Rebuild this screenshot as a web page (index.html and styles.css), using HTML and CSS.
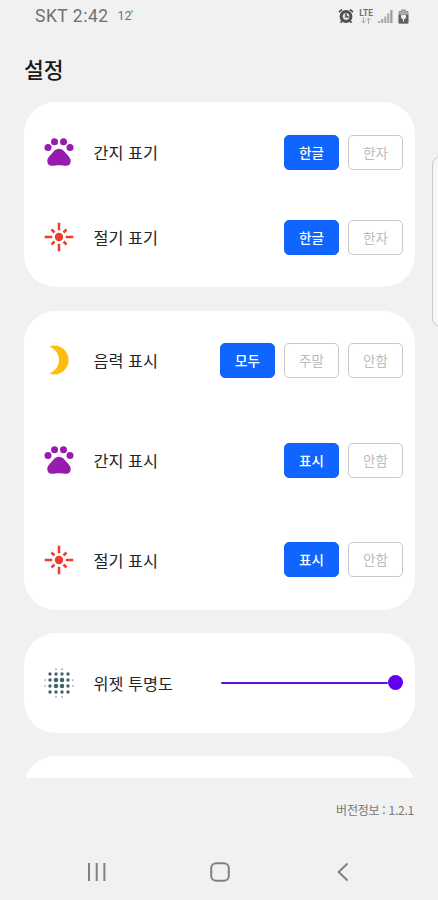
FILE: index.html
```html
<!DOCTYPE html>
<html lang="ko">
<head>
<meta charset="utf-8">
<title>설정</title>
<link rel="stylesheet" href="styles.css">
</head>
<body>
<svg class="defs" width="0" height="0" aria-hidden="true">
  <symbol id="paw" viewBox="0 0 30 30">
    <circle cx="4" cy="10.500" r="3.500"/><circle cx="10.500" cy="4.800" r="3.500"/><circle cx="19.500" cy="4.800" r="3.500"/><circle cx="26" cy="10.500" r="3.500"/>
    <path d="M15 11.800c3.200 0 5 2.200 6.700 4.300 2 2.500 5.100 4.700 5 8.300-.1 2.800-1.900 4.300-4.400 4.300-2.300 0-4.500-.5-7.300-.5s-5 .5-7.300.5c-2.500 0-4.300-1.500-4.400-4.300-.1-3.600 3-5.800 5-8.300 1.700-2.100 3.500-4.300 6.700-4.300z"/>
  </symbol>
  <symbol id="sun" viewBox="0 0 30 30">
    <circle cx="15" cy="15" r="4.200"/>
    <path d="M15 .7v7.500M15 21.800v7.500M.7 15h7.500M21.800 15h7.500M7.500 7.500l3 3M19.500 19.500l3 3M22.500 7.500l-3 3M10.500 19.500l-3 3" fill="none" stroke="currentColor" stroke-width="2.500"/>
  </symbol>
</svg>
<header class="status">
  <span class="clock">SKT 2:42</span><span class="temp">12<i>′</i></span>
  <div class="signals">
    <svg width="16" height="16" viewBox="0 0 16 16"><circle cx="8" cy="8.500" r="4.900" fill="#ddd" stroke="#505050" stroke-width="3"/><path d="M8 5.600v3.200h2.600" fill="none" stroke="#505050" stroke-width="1.500"/><path d="M1 4.200l3-2.700M15 4.200l-3-2.700M4.200 12.500l-1.700 2.300M11.800 12.500l1.700 2.300" stroke="#505050" stroke-width="1.700"/></svg>
    <div class="lte"><span>LTE</span><svg width="12" height="7" viewBox="0 0 12 7"><path d="M3.500 0v6M1.500 3.800l2 2.200 2-2.200M8.500 7V1M6.500 3.200l2-2.200 2 2.200" fill="none" stroke="#aaa" stroke-width="1"/></svg></div>
    <svg class="bars" width="15" height="14" viewBox="0 0 15 14"><path d="M1.200 14v-2M4.200 14v-4M7.300 14V7.500M10.300 14V4.500" stroke="#a9a9a9" stroke-width="2.100"/><path d="M13.400 14V1" stroke="#999" stroke-width="2.100"/></svg>
    <svg width="11" height="15" viewBox="0 0 11 15"><path d="M3.500 1h4v1.500H10V14H1V2.500h2.500z" fill="#aaa" stroke="#929292"/><path d="M.7 5.800h9.600V14.500H.7z" fill="#606060"/><path d="M5.500 12.500V10M3.500 6.500v2q0 1.300 2 1.300t2-1.300v-2z" fill="#f1f1f1" stroke="#f1f1f1" stroke-width="1"/></svg>
  </div>
</header>
<h1>설정</h1>
<main>
  <section class="card compact">
    <div class="row"><svg class="icon purple"><use href="#paw"/></svg><span class="label">간지 표기</span><div class="options"><button class="on">한글</button><button>한자</button></div></div>
    <div class="row"><svg class="icon red"><use href="#sun"/></svg><span class="label">절기 표기</span><div class="options"><button class="on">한글</button><button>한자</button></div></div>
  </section>
  <section class="card">
    <div class="row"><svg class="icon yellow" viewBox="0 0 30 30"><path d="M5.500 1.500C7 .8 8.500.5 10.200.5c8 0 14.400 6.500 14.400 14.500s-6.400 14.500-14.400 14.500c-1.700 0-3.200-.3-4.700-1C11.200 26 15 21.200 15 15S11.200 4 5.500 1.500z"/></svg><span class="label">음력 표시</span><div class="options"><button class="on">모두</button><button>주말</button><button>안함</button></div></div>
    <div class="row"><svg class="icon purple"><use href="#paw"/></svg><span class="label">간지 표시</span><div class="options"><button class="on">표시</button><button>안함</button></div></div>
    <div class="row"><svg class="icon red"><use href="#sun"/></svg><span class="label">절기 표시</span><div class="options"><button class="on">표시</button><button>안함</button></div></div>
  </section>
  <section class="card">
    <div class="row">
      <svg class="icon dots" viewBox="0 0 30 30">
        <g fill="none" stroke-linecap="round">
          <path d="M12 12h0M18 12h0M12 18h0M18 18h0" stroke-width="4.600"/>
          <path d="M6 6h0M12 6h0M18 6h0M24 6h0M6 12h0M24 12h0M6 18h0M24 18h0M6 24h0M12 24h0M18 24h0M24 24h0" stroke-width="3.400"/>
          <path d="M12 1.200h0M18 1.200h0M12 28.800h0M18 28.800h0M1.200 12h0M1.200 18h0M28.800 12h0M28.800 18h0" stroke-width="1.700" opacity=".6"/>
        </g>
      </svg>
      <span class="label">위젯 투명도</span>
      <div class="slider"><div class="track"></div><div class="thumb"></div></div>
    </div>
  </section>
  <section class="card"><div class="row"></div></section>
  <div class="edge"></div>
</main>
<footer>버전정보 : 1.2.1</footer>
<nav>
  <svg width="20" height="20" viewBox="0 0 20 20"><path d="M2 1v18M9.700 1v18M17.400 1v18"/></svg>
  <svg width="20" height="20" viewBox="0 0 20 20"><rect x="1.200" y="1.200" width="17.600" height="17.600" rx="5"/></svg>
  <svg width="20" height="20" viewBox="0 0 20 20"><path d="M14.500 1.500L5.700 10l8.800 8.500"/></svg>
</nav>
</body>
</html>
```
FILE: styles.css
```css
* { box-sizing: border-box; }
body {
  margin: 0;
  height: 900px;
  display: flex;
  flex-direction: column;
  overflow: hidden;
  background: #f1f1f1;
  color: #252525;
  font-family: "Noto Sans CJK KR", sans-serif;
}
.defs { position: absolute; }
.status {
  height: 32px;
  padding: 0 29px 0 35px;
  display: flex;
  align-items: center;
  color: #707070;
  font-family: Roboto, sans-serif;
}
.clock { font-size: 17.5px; letter-spacing: .5px; }
.temp { margin: -2px 0 0 9px; font-size: 12.5px; }
.temp i { margin-left: -1px; font-style: normal; }
.signals { margin-left: auto; display: flex; align-items: center; gap: 5px; }
.lte { display: flex; flex-direction: column; align-items: center; font-size: 8.5px; font-weight: 700; line-height: 8px; }
.bars { margin: -1px 0 0 0; }
h1 { height: 70px; margin: 0; padding: 21px 0 0 24px; font-size: 21.5px; font-weight: 500; line-height: 32px; color: #191919; }
main {
  position: relative;
  flex: 0 0 676px;
  padding: 0 23px 0 24px;
  overflow: hidden;
  display: flex;
  flex-direction: column;
  gap: 23.5px;
}
.card { flex-shrink: 0; border-radius: 32px; background: #fff; }
.row { height: 99.7px; padding: 0 12px 0 20px; display: flex; align-items: center; }
.compact { padding: 7.500px 0; }
.compact .row { height: 85px; }
.icon { width: 30px; height: 30px; flex: none; fill: currentColor; }
.purple { color: #971bad; }
.red { color: #ef3b30; }
.yellow { color: #fdbd0c; }
.dots { stroke: #42636e; }
.label { margin: 0 auto 0 19.5px; font-size: 16.3px; line-height: 24px; }
.options { display: flex; gap: 9px; }
button {
  width: 55px;
  height: 35px;
  padding: 0 0 1px;
  border: 1px solid #c8c8c8;
  border-radius: 5px;
  background: #fff;
  color: #bcbcbc;
  font: 400 13.500px/20px "Noto Sans CJK KR", sans-serif;
}
button.on { border-color: #1261f4; background: #1065ff; color: #fff; font-weight: 500; }
.slider { width: 182px; display: flex; align-items: center; }
.track { flex: 1; height: 2.500px; border-radius: 2px; background: #5a14e0; }
.thumb { width: 15px; height: 15px; border-radius: 50%; background: #6200ee; }
.edge {
  position: absolute;
  left: 432px;
  top: 54px;
  width: 20px;
  height: 171px;
  border: 1px solid #c9c9c9;
  border-radius: 9px;
  background: #f7f7f7;
}
footer { height: 64px; padding: 23px 24px 0 0; text-align: right; font-size: 12px; letter-spacing: -.25px; line-height: 18px; color: #777; }
nav { height: 58px; padding: 20px 85px 0 87px; display: flex; justify-content: space-between; }
nav svg { fill: none; stroke: #818181; stroke-width: 2; }
```
